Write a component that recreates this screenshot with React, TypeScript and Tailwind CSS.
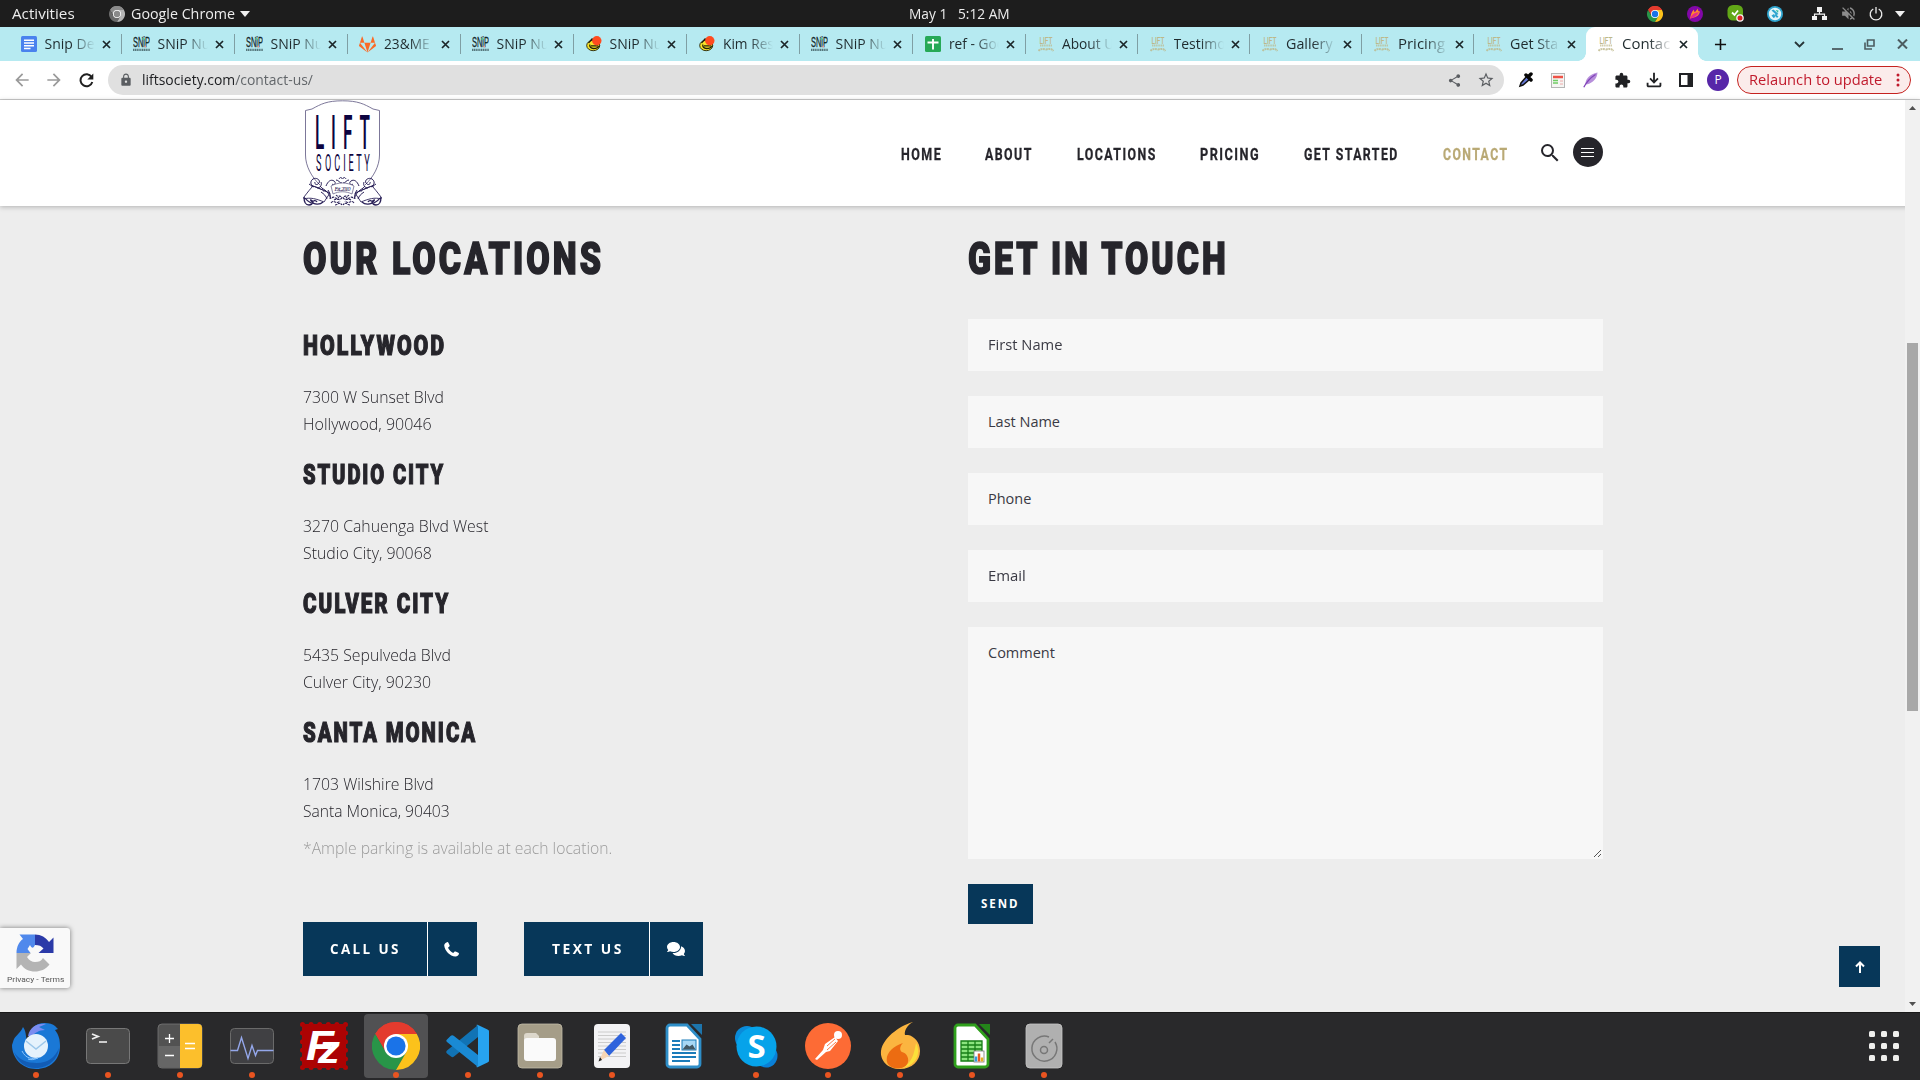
import { useLayoutEffect, useRef, useState, type ReactNode } from "react";
import {
  MdSearch, MdExtension, MdStarBorder, MdShare, MdOutlineFileDownload,
  MdLock, MdArrowBack, MdArrowForward, MdAdd, MdVolumeOff,
} from "react-icons/md";
import { FaComments, FaGitlab } from "react-icons/fa";

/* One line of text, stretched or narrowed to an exact width. */
function Fit({ w, className = "", children }: { w: number; className?: string; children: ReactNode }) {
  const ref = useRef<HTMLSpanElement>(null);
  const [scale, setScale] = useState(1);
  useLayoutEffect(() => {
    if (ref.current) setScale(w / ref.current.offsetWidth);
  }, [w]);
  return (
    <span className={"block shrink-0 whitespace-nowrap " + className} style={{ width: w }}>
      <span ref={ref} className="inline-block origin-left whitespace-pre align-top" style={{ transform: `scaleX(${scale})` }}>
        {children}
      </span>
    </span>
  );
}

function ChromeIcon({ size, gray = false }: { size: number; gray?: boolean }) {
  const c = gray ? ["#8a8a8a", "#6a6a6a", "#b5b5b5", "#8a8a8a"] : ["#e33b2e", "#289548", "#fcc21b", "#1a73e8"];
  return (
    <svg width={size} height={size} viewBox="0 0 48 48">
      <path d="M24 24 3.2 12A24 24 0 0 1 44.8 12Z" fill={c[0]} />
      <path d="M24 0A24 24 0 0 0 3.2 12L13.6 30 24 12H44.8A24 24 0 0 0 24 0Z" fill={c[0]} />
      <path d="M3.2 12A24 24 0 0 0 24 48L34.4 30 13.6 30Z" fill={c[1]} />
      <path d="M44.8 12A24 24 0 0 1 24 48L34.4 30 24 12Z" fill={c[2]} />
      <circle cx="24" cy="24" r="12" fill="#fff" />
      <circle cx="24" cy="24" r="9.6" fill={c[3]} />
    </svg>
  );
}

function DocsIcon() {
  return (
    <svg width="16" height="16" viewBox="0 0 16 16">
      <rect width="16" height="16" rx="1.5" fill="#4a82ee" />
      <path d="M3 4.200h10M3 7h10M3 9.800h10M3 12.500h6.500" stroke="#fff" strokeWidth="1.400" />
    </svg>
  );
}
function SnipIcon() {
  return (
    <svg width="17" height="16" viewBox="0 0 17 16">
      <text x="0" y="11" fontSize="15" fontFamily="Liberation Sans" textLength="17" lengthAdjust="spacingAndGlyphs" fill="#14272b" stroke="#14272b" strokeWidth=".3">SNiP</text>
      <circle cx="10.500" cy="3" r="1.200" fill="#5cc08d" />
      <circle cx="12.300" cy="10.500" r="1" fill="#e79a8e" />
      <path d="M0 13.800h17" stroke="#56777c" strokeWidth="2.200" strokeDasharray="1.300 .5" />
    </svg>
  );
}
function DuckIcon() {
  return (
    <svg width="16" height="16" viewBox="0 0 16 16">
      <ellipse cx="7.200" cy="9.500" rx="6.500" ry="5.200" fill="#f7e428" stroke="#20200a" strokeWidth=".9" />
      <path d="M2.500 7 6 3l2 .3M4 8.500c-1 2 1 4 3.500 4s5-1 6-3M5 9.800h7" fill="none" stroke="#20200a" strokeWidth="1.300" />
      <circle cx="10.800" cy="4.800" r="4.700" fill="#ff4b1f" />
    </svg>
  );
}
function SheetIcon() {
  return (
    <svg width="16" height="16" viewBox="0 0 16 16">
      <rect width="16" height="16" rx="1.500" fill="#27a957" />
      <path d="M8 3v10.500M2.500 6.500h11" stroke="#fff" strokeWidth="1.900" />
    </svg>
  );
}
function LiftIcon() {
  return (
    <svg width="16" height="16" viewBox="0 0 16 16">
      <text x="1.500" y="7.500" fontSize="9" fontWeight="500" fontFamily="Roboto" textLength="13" lengthAdjust="spacingAndGlyphs" fill="#bdb88a">LIFT</text>
      <path d="M2 9.500h12" stroke="#bdb88a" strokeWidth="2" strokeDasharray="1.300 .5" opacity=".7" />
      <path d="M.5 15c2-2.500 4-2.500 7.500-1.500 3.500-1 5.500-1 7.500 1.500" fill="none" stroke="#bdb88a" strokeWidth="2" strokeDasharray="2 .6" opacity=".8" />
    </svg>
  );
}

type Tab = { icon: ReactNode; title: string; w: number };
const tabs: Tab[] = [
  { icon: <DocsIcon />, title: "Snip Des", w: 57 },
  { icon: <SnipIcon />, title: "SNiP Nut", w: 58 },
  { icon: <SnipIcon />, title: "SNiP Nut", w: 58 },
  { icon: <FaGitlab size={17} color="#fb6a26" />, title: "23&ME", w: 46 },
  { icon: <SnipIcon />, title: "SNiP Nut", w: 58 },
  { icon: <DuckIcon />, title: "SNiP Nut", w: 58 },
  { icon: <DuckIcon />, title: "Kim Res", w: 51 },
  { icon: <SnipIcon />, title: "SNiP Nut", w: 58 },
  { icon: <SheetIcon />, title: "ref - Goo", w: 56 },
  { icon: <LiftIcon />, title: "About U", w: 52 },
  { icon: <LiftIcon />, title: "Testimo", w: 52 },
  { icon: <LiftIcon />, title: "Gallery", w: 47 },
  { icon: <LiftIcon />, title: "Pricing", w: 47 },
  { icon: <LiftIcon />, title: "Get Sta", w: 48 },
  { icon: <LiftIcon />, title: "Contac", w: 48 },
];

function TopBar() {
  return (
    <div className="flex h-[27px] shrink-0 items-center bg-[#1d1d1d] text-[14px] leading-[26px] text-[#ececec]">
      <Fit w={63} className="ml-3">Activities</Fit>
      <span className="mr-[6px] ml-[34px]"><ChromeIcon size={16} gray /></span>
      <Fit w={104}>Google Chrome</Fit>
      <Caret className="ml-[5px]" />
      <Fit w={101} className="ml-[659px]">{"May 1   5:12 AM"}</Fit>
      <div className="ml-auto flex items-center">
        <span className="flex w-10 justify-center"><ChromeIcon size={16} /></span>
        <span className="flex w-10 justify-center">
          <svg width="16" height="16" viewBox="0 0 16 16"><circle cx="8" cy="8" r="8" fill="#8207a8" /><path d="M3 12.500C4 9 4 6 7 3.500c0 2 .5 2.500 1 2.500C9 5 10 3.500 11 2.500c0 2 0 3 2 3C12 10 9 11.500 3 12.500Z" fill="#ff8a2a" /><path d="M3 12.500C5 8 7 7 12 6c-2 4-5 6-9 6.500Z" fill="#e82a8c" /></svg>
        </span>
        <span className="flex w-10 justify-center">
          <svg width="17" height="17" viewBox="0 0 17 17"><rect x=".5" width="15.500" height="15.500" rx="5.500" fill="#62a817" /><path d="m5 7.500 2.500 2.500L11 5.500" stroke="#fff" strokeWidth="1.800" fill="none" /><circle cx="13" cy="13" r="3.800" fill="#f4f4f4" /><circle cx="13" cy="13" r="2.500" fill="#dc1f26" /></svg>
        </span>
        <span className="flex w-10 justify-center">
          <svg width="16" height="16" viewBox="0 0 16 16"><circle cx="8" cy="8" r="8" fill="#2ea4cf" /><circle cx="8" cy="8" r="6.200" fill="#e4f5f9" /><path d="m4.500 4.500 2-1 5 4.500-2 1ZM7.500 9l1-1 3 2.500-1.500 1.500ZM4.500 9.500 7 8l1.500 3-2 1Z" fill="#2ea4cf" /><path d="m8.500 4 3 .5-.5 2.500Z" fill="#34bd9c" /></svg>
        </span>
        <svg className="ml-[17px]" width="15" height="14" viewBox="0 0 15 14"><path d="M5 0h5v5H5ZM0 9h5v4H0ZM10 9h5v4h-5Z" fill="#f2f2f2" /><path d="M7.500 4v3.200M2.500 10V7.200h10V10" fill="none" stroke="#f2f2f2" strokeWidth="1.200" /></svg>
        <MdVolumeOff className="ml-[13px]" size={17} color="#8c8c8c" />
        <svg className="ml-[12px]" width="14" height="14" viewBox="0 0 14 14"><path d="M4.300 2A5.800 5.800 0 1 0 9.700 2M7 0v6.500" fill="none" stroke="#ececec" strokeWidth="1.300" /></svg>
        <Caret className="mr-[15px] ml-[12px]" />
      </div>
    </div>
  );
}

function Caret({ className = "" }: { className?: string }) {
  return <svg className={"shrink-0 " + className} width="10" height="6" viewBox="0 0 10 6"><path d="M0 0h10L5 6Z" fill="#f0f0f0" /></svg>;
}

function TabStrip() {
  return (
    <div className="flex h-[34px] shrink-0 items-center bg-[#b6eaf1] pl-[9px] text-[14px] leading-[34px] text-[#1f2b2e]">
      {tabs.map((t, i) => {
        const active = i === tabs.length - 1;
        return (
          <div
            key={i}
            className={
              "relative flex h-full shrink-0 items-center pl-[11px] " +
              (i < 9 ? "w-[113px] " : "w-[112px] ") +
              (active ? "rounded-t-[9px] bg-white" : "")
            }
          >
            <span className="flex w-[17px] shrink-0 justify-center">{t.icon}</span>
            <span className="ml-[7.500px] w-[51px] overflow-hidden [mask-image:linear-gradient(to_right,black_52%,transparent_98%)]">
              <Fit w={t.w}>{t.title}</Fit>
            </span>
            <svg className="ml-[6px] shrink-0" width="9" height="9" viewBox="0 0 9 9"><path d="m1 1 7 7M8 1 1 8" stroke="#1b2629" strokeWidth="1.700" /></svg>
            {i < tabs.length - 2 && <span className="absolute top-[7px] right-0 h-5 w-px bg-[#7f9fa4]" />}
            {active && (
              <>
                <span className="absolute bottom-0 -left-2 size-2 bg-[radial-gradient(circle_at_0_0,transparent_7.500px,white_8px)]" />
                <span className="absolute -right-2 bottom-0 size-2 bg-[radial-gradient(circle_at_100%_0,transparent_7.500px,white_8px)]" />
              </>
            )}
          </div>
        );
      })}
      <MdAdd className="ml-[13px]" size={19} color="#111" />
      <svg className="ml-auto" width="11" height="7" viewBox="0 0 11 7"><path d="m1 1 4.500 4.500L10 1" fill="none" stroke="#273538" strokeWidth="1.800" /></svg>
      <svg className="ml-[27px]" width="11" height="11" viewBox="0 0 11 11"><path d="M0 10h11" stroke="#4c5c60" strokeWidth="1.800" /></svg>
      <svg className="ml-[21px]" width="11" height="11" viewBox="0 0 11 11"><path d="M3.500 1H10v6H3.500ZM1 3.500V10h7" fill="none" stroke="#4c5c60" strokeWidth="1.600" /></svg>
      <svg className="mr-[12px] ml-[22px]" width="11" height="10" viewBox="0 0 11 10"><path d="m1 .5 9 9M10 .5l-9 9" stroke="#4c5c60" strokeWidth="2" /></svg>
    </div>
  );
}

function Toolbar() {
  return (
    <div className="flex h-[39px] shrink-0 items-center border-b border-[#cbcbcb] bg-white text-[14px] leading-[30px]">
      <MdArrowBack className="ml-3" size={20} color="#9a9a9a" />
      <MdArrowForward className="ml-3" size={20} color="#9a9a9a" />
      <svg className="mr-[3px] ml-[15px]" width="15" height="15" viewBox="0 0 15 15"><path d="M12.600 4A6 6 0 1 0 13.300 9" fill="none" stroke="#1f1f1f" strokeWidth="2" /><path d="M14.300.5v6h-6Z" fill="#1f1f1f" /></svg>
      <div className="ml-[11px] flex h-[30px] w-[1396px] items-center rounded-full bg-[#e0e0e0]">
        <MdLock className="ml-[11px]" size={14} color="#5a5d61" />
        <Fit w={171} className="ml-[9px] text-[#62666a]"><span className="text-[#202124]">liftsociety.com</span>/contact-us/</Fit>
        <MdShare className="ml-auto" size={15} color="#5a5d61" />
        <MdStarBorder className="mr-[9px] ml-[15px]" size={18} color="#5a5d61" />
      </div>
      <div className="ml-[6px] flex items-center">
        <span className="flex w-8 justify-center">
          <svg width="18" height="18" viewBox="0 0 18 18"><path d="m3 15 1-3 6-7 3 3-7 6Z" fill="#6478d8" stroke="#111" strokeWidth="1.500" /><path d="m9 4 5 5M11 6l3-3" stroke="#050505" strokeWidth="3.500" strokeLinecap="round" /></svg>
        </span>
        <span className="flex w-8 justify-center">
          <svg width="14" height="15" viewBox="0 0 14 15"><rect x=".5" y=".5" width="13" height="14" fill="#f5f5f3" stroke="#b5b5b5" /><path d="M2 4h10" stroke="#ee5247" strokeWidth="2.500" /><path d="M2 7.500h5M2 10h5" stroke="#70cc65" strokeWidth="1.300" /><path d="M9 8h3M9 11h3" stroke="#eaa" /></svg>
        </span>
        <span className="flex w-8 justify-center">
          <svg width="15" height="16" viewBox="0 0 15 16"><path d="M2.500 12.500C2 7 7 2 14.500.5 14 6 11 10.500 3.500 12.500Z" fill="#b78fdb" /><path d="M.8 15.200C3 11 7 6 12.500 2.500" fill="none" stroke="#8143b8" strokeWidth="1.300" /></svg>
        </span>
        <span className="flex w-8 justify-center"><MdExtension size={17} color="#202124" /></span>
        <span className="flex w-8 justify-center"><MdOutlineFileDownload size={22} color="#202124" /></span>
        <span className="flex w-8 justify-center">
          <svg width="14" height="14" viewBox="0 0 14 14"><path d="M1 1h12v12H1Z" fill="none" stroke="#202124" strokeWidth="2" /><path d="M8.500 0H14v14H8.500Z" fill="#202124" /></svg>
        </span>
        <span className="flex w-8 justify-center">
          <span className="flex size-[22px] items-center justify-center rounded-full bg-[#5726a8] text-[12px] text-white">P</span>
        </span>
      </div>
      <div className="ml-[3px] flex h-[28px] w-[174px] items-center rounded-full border border-[#c5221f] bg-[#fbeceb] text-[#c01a2c]">
        <Fit w={133} className="ml-[11px]">Relaunch to update</Fit>
        <svg className="ml-[14px]" width="4" height="14" viewBox="0 0 4 14" fill="#c01a2c"><circle cx="2" cy="2" r="1.500" /><circle cx="2" cy="7" r="1.500" /><circle cx="2" cy="12" r="1.500" /></svg>
      </div>
    </div>
  );
}

/* Half of the ornamental banner under the shield; the other half is its mirror image. */
function Scroll() {
  return (
    <g fill="none" stroke="#2a2158">
      <path d="M1 97c3-4 7-9 9-11l17 7-6 9c-7-3-14-5-20-3Z" strokeWidth=".9" fill="#fff" />
      <path d="M1 97c0 5 1 8 5 8s5-5 1-5M8 101c3 4 9 4 12 1M2 98c2 3 6 5 6 5M9 103c1-3 4-3 5-1" strokeWidth="1.300" />
      <path d="M11 87c-4-2-4-6-1-8s8 1 6 4-5 1-4-1M14 88c4 0 5-4 4-6M17 86c2 3 6 4 8 7M8 86c5 0 9 3 12 4M6 84c2 2 4 1 5 3" strokeWidth="1" />
      <path d="M23 86c2-5 5-7 8-5s0 5-2 3M20 91c4-1 6 3 8 8M25 90c2 3 3 6 2 9M33 80c3 0 3 3 6 3M36 79c1-2 3-2 3 0M18 92c3 2 5 4 6 7" strokeWidth="1" />
      <path d="M29 98c2-3 4 3 7-1M28 103c3-4 5 2 9-2M33 95c2 3 4-1 6 3M32 105c3 0 4-4 7 0M31 100c3-2 5 1 8-2" strokeWidth="1.100" strokeDasharray="2.500 .7" />
    </g>
  );
}

function Logo() {
  return (
    <svg width="80" height="106" viewBox="0 0 80 106" className="shrink-0">
      <path d="M2.500 10.500 9 9C18 4 24 .8 39.500.8S61 4 70 9l6.500 1.500V55c0 11-6 22-14.500 30M2.500 10.500V55c0 11 6 22 14.500 30" fill="none" stroke="#6d688d" strokeWidth=".9" />
      <g fill="#0c0340" fontFamily="Roboto">
        <g transform="scale(.36 1)" fontSize="47.500" fontWeight="500">
          <text x="33" y="49">L</text><text x="77.500" y="49">I</text><text x="111" y="49">F</text><text x="157" y="49">T</text>
        </g>
        <g transform="scale(.38 1)" fontSize="24" fontWeight="400">
          <text x="34" y="71">S</text><text x="58" y="71">O</text><text x="82" y="71">C</text><text x="106" y="71">I</text><text x="120" y="71">E</text><text x="140" y="71">T</text><text x="161" y="71">Y</text>
        </g>
      </g>
      <Scroll />
      <g transform="matrix(-1 0 0 1 79 0)"><Scroll /></g>
      <path d="M28 86c7-4 16-4 23 0l-2 8c-6-3-13-3-19 0Z" fill="#fff" stroke="#6d688d" strokeWidth=".8" />
      <text x="31.500" y="91" fontSize="6" fontStyle="italic" fontFamily="Liberation Serif" textLength="16" fill="#150b4a">Est. 2010</text>
    </svg>
  );
}

const nav = [
  { label: "HOME", w: 41, cls: "" },
  { label: "ABOUT", w: 48, cls: "ml-[43.500px]" },
  { label: "LOCATIONS", w: 80, cls: "ml-[43.500px]" },
  { label: "PRICING", w: 60.5, cls: "ml-[43.500px]" },
  { label: "GET STARTED", w: 95, cls: "ml-[43.500px]" },
  { label: "CONTACT", w: 65.5, cls: "ml-[44px] text-[#b9a975]" },
];

function SiteHeader() {
  return (
    <header className="relative z-10 flex h-[106px] shrink-0 bg-white pl-[303px] shadow-[0_1px_5px_rgba(0,0,0,0.25)]">
      <Logo />
      <nav className="mt-[39px] ml-[517.500px] flex h-[30px] font-[Roboto] text-[17px] leading-[31px] font-bold tracking-[2px] text-[#26252b]">
        {nav.map((n) => <Fit key={n.label} w={n.w} className={n.cls + " [-webkit-text-stroke:0.3px]"}>{n.label}</Fit>)}
      </nav>
      <MdSearch className="mt-[41px] ml-[29px]" size={24} color="#26252b" />
      <span className="mt-[37px] ml-[11px] flex size-[30px] flex-col items-center justify-center gap-[3px] rounded-full bg-[#26252b]">
        <i className="h-px w-[13px] bg-white" /><i className="h-px w-[13px] bg-white" /><i className="h-px w-[13px] bg-white" />
      </span>
    </header>
  );
}

const places = [
  { name: "HOLLYWOOD", nw: 143, a: "7300 W Sunset Blvd", aw: 141, b: "Hollywood, 90046", bw: 129 },
  { name: "STUDIO CITY", nw: 142, a: "3270 Cahuenga Blvd West", aw: 185, b: "Studio City, 90068", bw: 129 },
  { name: "CULVER CITY", nw: 147, a: "5435 Sepulveda Blvd", aw: 148, b: "Culver City, 90230", bw: 128 },
  { name: "SANTA MONICA", nw: 174, a: "1703 Wilshire Blvd", aw: 131, b: "Santa Monica, 90403", bw: 147 },
];
const fields = [
  { label: "First Name", w: 74 },
  { label: "Last Name", w: 72 },
  { label: "Phone", w: 43 },
  { label: "Email", w: 38 },
];

function Locations() {
  return (
    <section className="w-[665px] pt-[23px] text-[#26252b]">
      <Fit w={301} className="font-[Roboto] text-[45px] leading-[60px] font-black tracking-[4px] [-webkit-text-stroke:1.600px]">OUR LOCATIONS</Fit>
      <div className="mt-[38px] flex flex-col gap-[19px]">
        {places.map((p) => (
          <div key={p.name}>
            <Fit w={p.nw} className="relative top-[0.500px] font-[Roboto] text-[27px] leading-[36px] font-black tracking-[2.500px] [-webkit-text-stroke:1.100px]">{p.name}</Fit>
            <div className="mt-5 text-[17px] leading-[27px] font-[360]">
              <Fit w={p.aw} className="-ml-[0.500px]">{p.a}</Fit>
              <Fit w={p.bw} className="-ml-[0.500px]">{p.b}</Fit>
            </div>
          </div>
        ))}
      </div>
      <Fit w={309} className="mt-[10px] text-[17px] leading-[27px] font-[360] text-[#9b9b9b]">*Ample parking is available at each location.</Fit>
      <div className="mt-[61px] flex gap-[47px] text-[14px] leading-[54px] font-bold tracking-[2.500px] text-white">
        <div className="flex h-[54px] w-[174px] bg-[#073759]">
          <div className="w-[125px] border-r border-white pl-[27px]"><Fit w={71}>CALL US</Fit></div>
          <div className="flex flex-1 items-center justify-center">
            <svg className="-ml-[2px]" width="15" height="15" viewBox="0 0 15 15" fill="#fff"><path d="M3 .2c.6-.2 1.200 0 1.400.5l1.200 2.600c.2.500 0 .9-.3 1.200L4 5.700c1 2.200 2.900 4.200 5.200 5.300l1.200-1.300c.3-.3.800-.4 1.200-.2l2.800 1.200c.5.300.7.8.5 1.300-.4 1.500-2 2.700-3.600 2.500C6 14.200.8 9 .2 3.500.2 2 1.500.6 3 .2Z" /></svg>
          </div>
        </div>
        <div className="flex h-[54px] w-[179px] bg-[#073759]">
          <div className="w-[126px] border-r border-white pl-[28px]"><Fit w={72}>TEXT US</Fit></div>
          <div className="flex flex-1 items-center justify-center"><FaComments className="-ml-[2px]" size={18} /></div>
        </div>
      </div>
    </section>
  );
}

function ContactForm() {
  return (
    <section className="w-[635px] pt-[23px] text-[#26252b]">
      <Fit w={261} className="font-[Roboto] text-[45px] leading-[60px] font-black tracking-[4px] [-webkit-text-stroke:1.600px]">GET IN TOUCH</Fit>
      <div className="mt-[30px] flex flex-col gap-[25px] text-[14.500px] text-[#3a3a44]">
        {fields.map((f) => (
          <div key={f.label} className="h-[52px] bg-[#f7f7f7] pl-[20px] leading-[51px]"><Fit w={f.w}>{f.label}</Fit></div>
        ))}
        <div className="relative h-[232px] bg-[#f7f7f7] pl-[20px] leading-[51px]">
          <Fit w={67}>Comment</Fit>
          <svg className="absolute right-[1px] bottom-[1px]" width="9" height="9" viewBox="0 0 9 9"><path d="M1 8 8 1M5 8l3-3" stroke="#555" /></svg>
        </div>
      </div>
      <div className="mt-[25px] h-10 w-[65px] bg-[#073759] pl-[13px] text-[11.500px] leading-[40px] font-bold tracking-[2px] text-white">
        <Fit w={39}>SEND</Fit>
      </div>
    </section>
  );
}

function Recaptcha() {
  return (
    <div className="absolute top-[722px] left-0 flex h-[60px] w-[70px] flex-col items-center rounded-r-[3px] bg-[#f9f9f9] pt-[6px] shadow-[0_0_5px_#777]">
      <svg width="38" height="38" viewBox="0 0 38 38">
        <path d="M19 .500V11c-1.500 3-3 4-5 0l-2.500 4 3 4H.5C.5 13 3 7.500 7 5L3.500.500Z" fill="#5089ec" />
        <path d="M19 .500c6 0 11 3 14 7.500l4.500-4.500V19H22.500l5-4.500C25.500 12 23 11 19 11Z" fill="#2b3aa8" />
        <path d="M.5 19H15l-4 4c2 3.500 5 5 8 5 4 0 6-1 8-4l6.500 6.500c-4 5-9 7-14.500 7-6 0-11-2.500-14-7L.5 35Z" fill="#b4b4b4" />
      </svg>
      <Fit w={57} className="mt-[2px] font-[Roboto] text-[8px] leading-[11px] text-[#555]">Privacy - Terms</Fit>
    </div>
  );
}

function Scrollbar() {
  return (
    <div className="absolute top-[-106px] right-0 bottom-0 z-20 flex w-[15px] flex-col items-center bg-[#f1f1f1]">
      <svg className="mt-[6px]" width="7" height="4" viewBox="0 0 7 4"><path d="M0 4h7L3.500 0Z" fill="#505050" /></svg>
      <div className="mt-[233px] h-[368px] w-[11px] bg-[#a8a8a8]" />
      <svg className="mt-auto mb-[6px]" width="7" height="4" viewBox="0 0 7 4"><path d="M0 0h7L3.500 4Z" fill="#505050" /></svg>
    </div>
  );
}

function Frame({ children }: { children: ReactNode }) {
  return <svg width="48" height="48" viewBox="0 0 48 48">{children}</svg>;
}
const dock: { icon: ReactNode; dot: boolean; active?: boolean }[] = [
  { dot: true, icon: <Frame>
    <path d="M1 20C2 14 8 12 11 5c4 5 2 11 5 15C17 8 22 1 33 1c4 0 8 1 10 3l3 3-3 1c4 5 5 10 5 16 0 14-10 23-24 23S0 36 0 23Z" fill="#1a78d6" />
    <path d="M2 30c4 11 13 17 24 16s20-9 21-20c-4 10-12 15-22 15S7 38 2 30Z" fill="#125cb5" />
    <path d="M16 14C18 5 25 1 34 2l-7 3 6 3c-6 0-10 3-13 6Z" fill="#7b8cf0" />
    <circle cx="24" cy="24" r="12" fill="#e5f2fc" /><path d="m14 19 10 8 10-8" fill="none" stroke="#9cc7ea" strokeWidth="1.500" />
    <path d="M10 29c4 8 10 8 16 7-5 2-7 2-10 1" stroke="#8ac6ff" fill="none" />
  </Frame> },
  { dot: true, icon: <Frame>
    <rect x="2.500" y="6.500" width="43" height="35" rx="4" fill="#4a4a4a" stroke="#777" />
    <path d="m8 12 6 2.500L8 17" fill="none" stroke="#eee" strokeWidth="1.800" /><path d="M15 20h8" stroke="#eee" strokeWidth="1.600" />
  </Frame> },
  { dot: true, icon: <Frame>
    <rect x="2" y="2" width="44" height="44" rx="4" fill="#525252" stroke="#777" strokeWidth=".8" /><path d="M2.500 24H24v21.500H6a4 4 0 0 1-3.500-4Z" fill="#666" />
    <path d="M24 2h18a4 4 0 0 1 4 4v36a4 4 0 0 1-4 4H24Z" fill="#fcbf2c" />
    <path d="M9 16.500h9M13.500 12v9M9 33.500h9" stroke="#fff" strokeWidth="1.300" /><path d="M29 21.500h10M29 26.500h10" stroke="#fff" strokeWidth="1.300" />
  </Frame> },
  { dot: true, icon: <Frame>
    <rect x="2.500" y="6.500" width="43" height="35" rx="4" fill="#404043" stroke="#6a6a6a" />
    <path d="M2.500 28.500h7l4-13 6.500 21 4-13 3.500 10 2-5h16" fill="none" stroke="#94a7ea" strokeWidth="1.400" />
  </Frame> },
  { dot: false, icon: <Frame>
    <path d="M2.500 2.500h43v43h-43Z" fill="none" stroke="#b00505" strokeWidth="5" strokeDasharray="0 8.600" strokeLinecap="round" />
    <rect x="2" y="2" width="44" height="44" fill="#ac0303" />
    <g fontFamily="Liberation Sans" fontWeight="700" fontStyle="italic" fill="#fff">
      <text x="6" y="38" fontSize="42" textLength="28" lengthAdjust="spacingAndGlyphs">F</text><text x="18" y="41" fontSize="38" textLength="22" lengthAdjust="spacingAndGlyphs">z</text>
    </g>
  </Frame> },
  { dot: true, active: true, icon: <ChromeIcon size={48} /> },
  { dot: true, icon: <Frame>
    <path d="M34 3v12L10 34.500c-1 1-2 1-3 0L3 31.500c-1-1-1-2 0-3Z" fill="#1173b5" />
    <path d="M3 17.500 6.500 14c1-1 2.500-1 3.500 0L34 33v12L3 20c-1-1-1-1.500 0-2.500Z" fill="#1a8ad4" />
    <path d="m34 3 9.500 4.500c1 .5 1.500 1 1.500 2v29c0 1-.5 1.500-1.500 2L34 45c-1 .5-2 0-2.500-.5 1 .5 2.500 0 2.500-1.500V5c0-1.500-1.500-2-2.500-1.500.5-.5 1.500-1 2.500-.5Z" fill="#27a3f0" />
  </Frame> },
  { dot: true, icon: <Frame>
    <rect x="2" y="2" width="44" height="44" rx="4" fill="#a59d88" stroke="#c2bba8" strokeWidth=".8" />
    <path d="M8 14a3 3 0 0 1 3-3h9l3 3v8H8Z" fill="#dcd7cb" /><rect x="8" y="16" width="32" height="23" rx="3" fill="#fafafa" />
  </Frame> },
  { dot: true, icon: <Frame>
    <rect x="6" y="2" width="36" height="44" rx="4" fill="#f3f3f5" />
    <path d="M10 10h28M10 13.500h28M10 17h28M10 20.500h28M10 24h28M10 27.500h28M10 31h28M10 34.500h28" stroke="#ccc" />
    <path d="m16 28 17-17 5 5-17 18Z" fill="#2f63dc" /><path d="m16 28 5 6-10 5Z" fill="#f6d5b5" /><path d="m12 35 2 3-3.500 1.500Z" fill="#222" />
  </Frame> },
  { dot: false, icon: <Frame>
    <path d="M10 3h17l13 14v25a3 3 0 0 1-3 3H10a3 3 0 0 1-3-3V6a3 3 0 0 1 3-3Z" fill="#fff" stroke="#2e8ec8" strokeWidth="2.800" /><path d="M31 2h11v11Z" fill="#1d75ad" />
    <path d="M12 19h8M12 23h8M12 27h8M12 31h24M12 35h24M12 39h18" stroke="#1b7cba" strokeWidth="1.800" /><rect x="22" y="18" width="14" height="10" fill="#a8d8f5" stroke="#1b7cba" /><path d="m22.500 27.500 4-5 3 2 3-2 3 5Z" fill="#435864" />
  </Frame> },
  { dot: true, icon: <Frame>
    <circle cx="15" cy="16" r="12" fill="#0a8bd9" /><circle cx="34" cy="34" r="11.500" fill="#0a80d8" /><circle cx="24.500" cy="24.500" r="20" fill="#06a3ea" />
    <text x="24.500" y="36" fontSize="33" fontWeight="700" fontFamily="Open Sans" textAnchor="middle" fill="#fff">S</text>
  </Frame> },
  { dot: true, icon: <Frame>
    <circle cx="24" cy="24" r="23" fill="#fd6b35" /><circle cx="34" cy="13" r="4" fill="#fff" />
    <path d="M31 15 21 22l-2 6-8 9 2 1 9-8 4-1 8-10Z" fill="#fff" /><path d="m31 17-8 7m9-4-9 8" stroke="#fd6b35" strokeWidth=".9" />
  </Frame> },
  { dot: true, icon: <Frame>
    <path d="M37 0C28 2 7 14 5 29c-1 10 7 18 19 18s20-8 20-18C44 20 38 14 32 13l-3 0C28 9 31 3 37 0Z" fill="#fbb540" />
    <path d="M40 21c6 11-1 23-14 25 10-5 12-14 14-25Z" fill="#fbe03a" />
    <path d="M27 21c-10 3-18 11-16 19s19 9 21 0c1-5-2-9-6-10-3-2-2-6 1-9Z" fill="#ec6c12" />
  </Frame> },
  { dot: true, icon: <Frame>
    <path d="M10 3h17l13 14v25a3 3 0 0 1-3 3H10a3 3 0 0 1-3-3V6a3 3 0 0 1 3-3Z" fill="#fff" stroke="#2f9f1c" strokeWidth="2.800" /><path d="M31 2h11v11Z" fill="#24851a" />
    <rect x="13" y="19" width="21" height="20" fill="#8be47e" /><path d="M13 19h21v20H13ZM13 23h21M13 27h21M13 31h21M13 35h21M20 19v20M27 19v20" stroke="#167d16" strokeWidth="1.300" fill="none" />
    <rect x="26" y="29" width="10" height="11" fill="#fff" stroke="#777" strokeWidth=".8" /><path d="M28 39.500v-5" stroke="#319be0" strokeWidth="2.500" /><path d="M31 39.500v-8" stroke="#e55a22" strokeWidth="2.500" /><path d="M34 39.500v-4" stroke="#e5b022" strokeWidth="2.500" />
  </Frame> },
  { dot: true, icon: <Frame>
    <rect x="6" y="2" width="36" height="44" rx="4" fill="#b0b0b0" stroke="#c6c6c6" strokeWidth=".8" />
    <path d="M35 20a12.500 12.500 0 1 1-6-5M29 21l4-4" fill="none" stroke="#777" strokeWidth="1.500" /><circle cx="24" cy="28" r="3.500" fill="none" stroke="#777" strokeWidth="1.500" />
  </Frame> },
];

function Dock() {
  return (
    <footer className="flex h-[68px] shrink-0 items-center border-t border-[#191919] bg-[#29292b] pb-px">
      {dock.map((d, i) => (
        <div key={i} className="flex w-[72px] justify-center">
          <div className={"relative flex h-16 w-16 items-center justify-center rounded-[4px] " + (d.active ? "bg-[#515153]" : "")}>
            {d.icon}
            {d.dot && <svg className="absolute bottom-0" width="6" height="6" viewBox="0 0 6 6"><circle cx="3" cy="3" r="3" fill="#e95420" /></svg>}
          </div>
        </div>
      ))}
      <div className="mr-[21px] ml-auto grid grid-cols-3 gap-[6px]">
        {Array.from({ length: 9 }, (_, i) => <span key={i} className="size-[6px] rounded-[1.500px] bg-[#eeeeec]" />)}
      </div>
    </footer>
  );
}

export default function App() {
  return (
    <div className="flex h-[1080px] w-[1920px] flex-col overflow-hidden bg-[#ededed] font-['Open_Sans',sans-serif]">
      <TopBar />
      <TabStrip />
      <Toolbar />
      <SiteHeader />
      <main className="relative flex min-h-0 flex-1 pl-[303px]">
        <Locations />
        <ContactForm />
        <Recaptcha />
        <div className="absolute top-[740px] left-[1839px] flex size-[41px] items-center justify-center bg-[#073759]">
          <svg width="10" height="12" viewBox="0 0 10 12"><path d="M5 12V2M1 5.500l4-4 4 4" fill="none" stroke="#fff" strokeWidth="2" /></svg>
        </div>
        <Scrollbar />
      </main>
      <Dock />
    </div>
  );
}
